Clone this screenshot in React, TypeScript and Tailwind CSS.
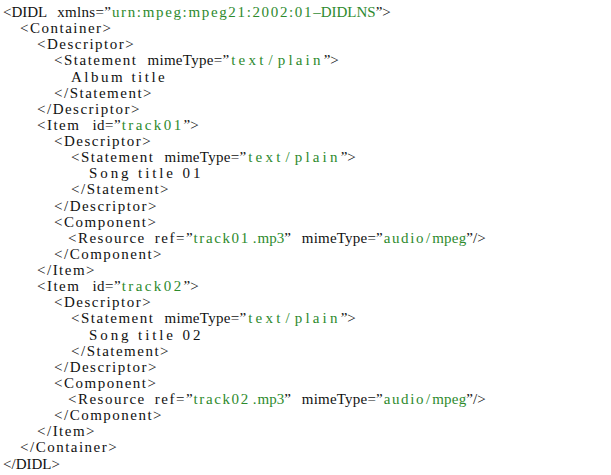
import React from "react";

type Tok = { t: string; c: string };
type Line = { lvl: number; toks: Tok[] };

const G = "text-[#2d8a2d]";

const stmt = (lvl: number): Line => ({
  lvl,
  toks: [
    { t: "<Statement", c: "tracking-[1.5px]" },
    { t: "mimeType=", c: "tracking-[0.3px] ml-[10px]" },
    { t: "\u201D", c: "" },
    { t: "text", c: `${G} tracking-[3.2px] ml-[2px]` },
    { t: "/", c: `${G} tracking-[0px] ml-[2px] mr-[5px]` },
    { t: "plain", c: `${G} tracking-[3.2px]` },
    { t: "\u201D>", c: "" },
  ],
});

const res = (lvl: number, n: string): Line => ({
  lvl,
  toks: [
    { t: "<Resource", c: "tracking-[1.5px] -ml-[3px]" },
    { t: "ref=", c: "tracking-[1.5px] ml-[9px]" },
    { t: "\u201D", c: "" },
    { t: `track${n}`, c: `${G} tracking-[1.6px] ml-[1px]` },
    { t: ".", c: `${G} tracking-[0px] ml-[3px] mr-[1px]` },
    { t: "mp3", c: `${G} tracking-[0px]` },
    { t: "\u201D", c: "" },
    { t: "mimeType=", c: "tracking-[0.2px] ml-[11px]" },
    { t: "\u201D", c: "" },
    { t: "audio", c: `${G} tracking-[1.6px] ml-[1px]` },
    { t: "/", c: `${G} tracking-[0px] ml-[1px] mr-[2px]` },
    { t: "mpeg", c: `${G} tracking-[0.2px]` },
    { t: "\u201D/>", c: "" },
  ],
});

const T = (lvl: number, t: string, c = "tracking-[1.5px]"): Line => ({ lvl, toks: [{ t, c }] });

const item = (n: string): Line[] => [
  {
    lvl: 2,
    toks: [
      { t: "<Item", c: "tracking-[1.5px]" },
      { t: "id=", c: "tracking-[0.5px] ml-[12px]" },
      { t: "\u201D", c: "" },
      { t: `track${n}`, c: `${G} tracking-[2.4px] ml-[1px]` },
      { t: "\u201D>", c: "" },
    ],
  },
  T(3, "<Descriptor>"),
  stmt(4),
  T(5, `Song title ${n}`, "tracking-[2.9px]"),
  T(4, "</Statement>"),
  T(3, "</Descriptor>"),
  T(3, "<Component>"),
  res(4, n),
  T(3, "</Component>"),
  T(2, "</Item>"),
];

const lines: Line[] = [
  {
    lvl: 0,
    toks: [
      { t: "<DIDL", c: "tracking-[0px]" },
      { t: "xmlns=", c: "tracking-[0.3px] ml-[10px]" },
      { t: "\u201D", c: "" },
      { t: "urn:mpeg:mpeg21:2002:01", c: `${G} tracking-[1.65px] ml-[1px]` },
      { t: "\u2013DIDLNS", c: `${G} tracking-[0px]` },
      { t: "\u201D>", c: "" },
    ],
  },
  T(1, "<Container>"),
  T(2, "<Descriptor>"),
  stmt(3),
  T(4, "Album title", "tracking-[2.5px]"),
  T(3, "</Statement>"),
  T(2, "</Descriptor>"),
  ...item("01"),
  ...item("02"),
  T(1, "</Container>"),
  T(0, "</DIDL>", "tracking-[0px]"),
];

const indent = [
  "pl-[3px]",
  "pl-[20px]",
  "pl-[37px]",
  "pl-[54px]",
  "pl-[71px]",
  "pl-[89px]",
];

export default function App() {
  return (
    <div
      className="w-[611px] h-[475px] bg-white pt-[4px] text-[#111] text-[15px] leading-[16.14px] overflow-hidden"
      style={{ fontFamily: '"Liberation Serif", serif' }}
    >
      {lines.map((l, i) => (
        <div key={i} className={`whitespace-pre h-[16.14px] ${indent[l.lvl]}`}>
          {l.toks.map((tk, j) => (
            <span key={j} className={tk.c}>
              {tk.t}
            </span>
          ))}
        </div>
      ))}
    </div>
  );
}
